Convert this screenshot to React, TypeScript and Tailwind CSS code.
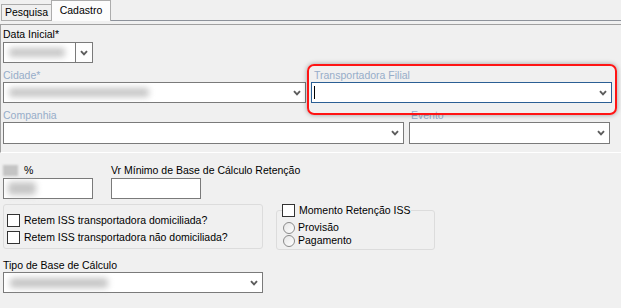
import React from 'react';

const font = "font-['Liberation_Sans',Arial,sans-serif]";

function Chevron() {
  return (
    <svg width="8" height="6" viewBox="0 0 8 6" className="shrink-0">
      <path d="M1 1.2 L4 4.4 L7 1.2" fill="none" stroke="#5c5c5c" strokeWidth="1.9" />
    </svg>
  );
}

function Blur({ className }: { className: string }) {
  return <div className={`rounded-[3px] bg-[#c6c6c6] blur-[3px] ${className}`} />;
}

function Check({ className = '' }: { className?: string }) {
  return <div className={`h-[13px] w-[13px] shrink-0 border border-[#333333] bg-white ${className}`} />;
}

function Radio() {
  return (
    <div className="h-[12px] w-[12px] shrink-0 rounded-full border border-[#8a8a8a] bg-gradient-to-br from-[#e6e6e6] to-white" />
  );
}

export default function App() {
  return (
    <div className={`relative h-[308px] w-[621px] overflow-hidden bg-[#f0f0f0] text-[10.5px] text-black ${font}`}>
      {/* Tabs */}
      <div className="flex h-[21px] items-end">
        <div className="ml-[1px] flex h-[17px] w-[50px] items-center justify-center border-b border-l border-t border-[#acacac] pt-px">
          Pesquisa
        </div>
        <div className="flex h-[21px] w-[60px] items-start justify-center border-l border-r border-t border-[#acacac] bg-[#fcfcfc] pt-[2px]">
          Cadastro
        </div>
        <div className="h-[21px] flex-1 border-b border-[#8d929b]" />
      </div>

      {/* Top panel */}
      <div className="mt-[3px] flex h-[129px] flex-col border-b border-l border-t border-b-white border-l-[#a0a0a0] border-t-[#a0a0a0] pl-[2px]">
        <div className="mt-[2px] h-[15px] leading-[15px]">Data Inicial*</div>
        <div className="flex h-[21px] w-[90px] border border-[#7a7a7a] bg-white">
          <div className="flex flex-1 items-center">
            <Blur className="ml-[5px] h-[9px] w-[56px]" />
          </div>
          <div className="flex w-[17px] items-center justify-center border-l border-[#7a7a7a] bg-[#fdfdfd]">
            <Chevron />
          </div>
        </div>

        <div className="mt-[5px] flex">
          <div className="flex w-[303px] flex-col">
            <div className="h-[14px] leading-[14px] text-[#97adc9]">Cidade*</div>
            <div className="flex h-[21px] items-center border border-[#7a7a7a] bg-white pr-[4px]">
              <Blur className="ml-[5px] h-[9px] w-[140px]" />
              <div className="flex-1" />
              <Chevron />
            </div>
          </div>
          <div className="ml-[5px] flex w-[301px] flex-col">
            <div className="h-[14px] pl-[3px] leading-[14px] text-[#97adc9]">Transportadora Filial</div>
            <div className="flex h-[21px] items-center border border-[#2b5f94] bg-white pr-[4px]">
              <div className="ml-[2px] h-[13px] w-px bg-black" />
              <div className="flex-1" />
              <Chevron />
            </div>
          </div>
        </div>

        <div className="mt-[5px] flex">
          <div className="flex w-[401px] flex-col">
            <div className="h-[14px] leading-[14px] text-[#97adc9]">Companhia</div>
            <div className="flex h-[22px] items-center justify-end border border-[#7a7a7a] bg-white pr-[4px]">
              <Chevron />
            </div>
          </div>
          <div className="ml-[5px] flex w-[201px] flex-col">
            <div className="h-[14px] pl-[2px] leading-[14px] text-[#97adc9]">Evento</div>
            <div className="flex h-[22px] items-center justify-end border border-[#7a7a7a] bg-white pr-[4px]">
              <Chevron />
            </div>
          </div>
        </div>
      </div>

      {/* Lower area */}
      <div className="flex flex-col pl-[3px]">
        <div className="mt-[10px] flex">
          <div className="flex w-[90px] flex-col">
            <div className="flex h-[15px] items-center">
              <div className="h-[11px] w-[15px] bg-[#c4c4c4] blur-[1px]" />
              <span className="ml-[6px] leading-[15px]">%</span>
            </div>
            <div className="flex h-[21px] items-center border border-[#7a7a7a] bg-white">
              <Blur className="ml-[4px] h-[13px] w-[28px]" />
            </div>
          </div>
          <div className="ml-[18px] flex flex-col">
            <div className="h-[15px] leading-[15px]">Vr Mínimo de Base de Cálculo Retenção</div>
            <div className="h-[21px] w-[90px] border border-[#7a7a7a] bg-white" />
          </div>
        </div>

        <div className="mt-[5px] flex items-start">
          <div className="flex h-[45px] w-[260px] flex-col rounded-[3px] border border-[#dcdcdc] pl-[3px] pt-[7px]">
            <div className="flex h-[17px] items-center gap-[4px]">
              <Check />
              <span>Retem ISS transportadora domiciliada?</span>
            </div>
            <div className="flex h-[17px] items-center gap-[4px]">
              <Check />
              <span>Retem ISS transportadora não domiciliada?</span>
            </div>
          </div>

          <div className="ml-[13px] mt-[6px] flex h-[40px] w-[159px] flex-col rounded-[3px] border border-[#dcdcdc]">
            <div className="-mt-[7px] ml-[5px] flex h-[13px] w-fit items-center gap-[4px] bg-[#f0f0f0] pr-[1px]">
              <Check className="h-[12px] w-[12px]" />
              <span>Momento Retenção ISS</span>
            </div>
            <div className="ml-[6px] mt-[4px] flex h-[13px] items-center gap-[3px]">
              <Radio />
              <span>Provisão</span>
            </div>
            <div className="ml-[6px] flex h-[13px] items-center gap-[3px]">
              <Radio />
              <span>Pagamento</span>
            </div>
          </div>
        </div>

        <div className="mt-[9px] h-[13px] leading-[13px]">Tipo de Base de Cálculo</div>
        <div className="flex h-[21px] w-[260px] items-center border border-[#7a7a7a] bg-white pr-[4px]">
          <Blur className="ml-[6px] h-[10px] w-[98px]" />
          <div className="flex-1" />
          <Chevron />
        </div>
      </div>

      {/* Red highlight annotation */}
      <div className="absolute left-[307px] top-[64px] h-[51px] w-[310px] rounded-[7px] border-2 border-[#ff1414] shadow-[0_0_5px_rgba(0,0,0,0.35)]" />
    </div>
  );
}
